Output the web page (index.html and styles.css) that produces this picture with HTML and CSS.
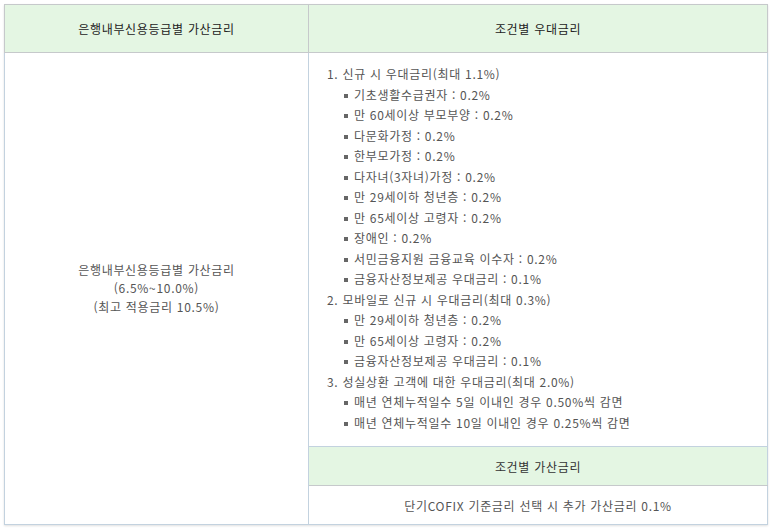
FILE: index.html
```html
<!DOCTYPE html>
<html lang="ko">
<head>
<meta charset="utf-8">
<link rel="stylesheet" href="styles.css">
</head>
<body>
<table class="rate">
  <colgroup>
    <col class="c1">
    <col class="c2">
  </colgroup>
  <thead>
    <tr class="head">
      <th>은행내부신용등급별 가산금리</th>
      <th>조건별 우대금리</th>
    </tr>
  </thead>
  <tbody>
    <tr>
      <td class="left" rowspan="3">은행내부신용등급별 가산금리<br>(6.5%~10.0%)<br>(최고 적용금리 10.5%)</td>
      <td class="list-cell">
        <ol class="main">
          <li>1. 신규 시 우대금리(최대 1.1%)
            <ul class="sub">
              <li>기초생활수급권자 : 0.2%</li>
              <li>만 60세이상 부모부양 : 0.2%</li>
              <li>다문화가정 : 0.2%</li>
              <li>한부모가정 : 0.2%</li>
              <li>다자녀(3자녀)가정 : 0.2%</li>
              <li>만 29세이하 청년층 : 0.2%</li>
              <li>만 65세이상 고령자 : 0.2%</li>
              <li>장애인 : 0.2%</li>
              <li>서민금융지원 금융교육 이수자 : 0.2%</li>
              <li>금융자산정보제공 우대금리 : 0.1%</li>
            </ul>
          </li>
          <li>2. 모바일로 신규 시 우대금리(최대 0.3%)
            <ul class="sub">
              <li>만 29세이하 청년층 : 0.2%</li>
              <li>만 65세이상 고령자 : 0.2%</li>
              <li>금융자산정보제공 우대금리 : 0.1%</li>
            </ul>
          </li>
          <li>3. 성실상환 고객에 대한 우대금리(최대 2.0%)
            <ul class="sub">
              <li>매년 연체누적일수 5일 이내인 경우 0.50%씩 감면</li>
              <li>매년 연체누적일수 10일 이내인 경우 0.25%씩 감면</li>
            </ul>
          </li>
        </ol>
      </td>
    </tr>
    <tr class="subhead">
      <td>조건별 가산금리</td>
    </tr>
    <tr>
      <td class="center">단기COFIX 기준금리 선택 시 추가 가산금리 0.1%</td>
    </tr>
  </tbody>
</table>
</body>
</html>
```

FILE: styles.css
```css
html, body {
  margin: 0;
  padding: 0;
  background: #fff;
}
body {
  padding: 4px;
  font-family: "Noto Sans CJK KR", "Noto Sans", sans-serif;
  font-size: 12px;
  letter-spacing: 0.7px;
  color: #555;
}
.rate {
  border-collapse: collapse;
  table-layout: fixed;
  width: 763px;
  box-shadow: 0 1px 2px rgba(0, 0, 0, 0.12);
}
.c1 { width: 304px; }
.c2 { width: 459px; }

.head th {
  height: 47px;
  padding: 0;
  background: #e4f6e3;
  border: 1px solid #c6c9cb;
  font-weight: normal;
  color: #222;
  text-align: center;
  vertical-align: middle;
}
td {
  border: 1px solid #c3d2df;
  padding: 0;
}
.left {
  text-align: center;
  vertical-align: middle;
  line-height: 18.5px;
}
.list-cell {
  padding: 11px 10px 13px 18px;
  vertical-align: top;
}
.main, .sub {
  list-style: none;
  margin: 0;
  padding: 0;
}
.main > li, .sub > li {
  line-height: 20.5px;
}
.sub > li {
  position: relative;
  padding-left: 27px;
}
.sub > li::before {
  content: "";
  position: absolute;
  left: 17px;
  top: 9px;
  width: 4px;
  height: 4px;
  background: #666;
}
.subhead td {
  height: 38px;
  background: #e4f6e3;
  text-align: center;
  color: #333;
  border-bottom-color: #c6c9cb;
}
.center {
  height: 38px;
  text-align: center;
}
```
